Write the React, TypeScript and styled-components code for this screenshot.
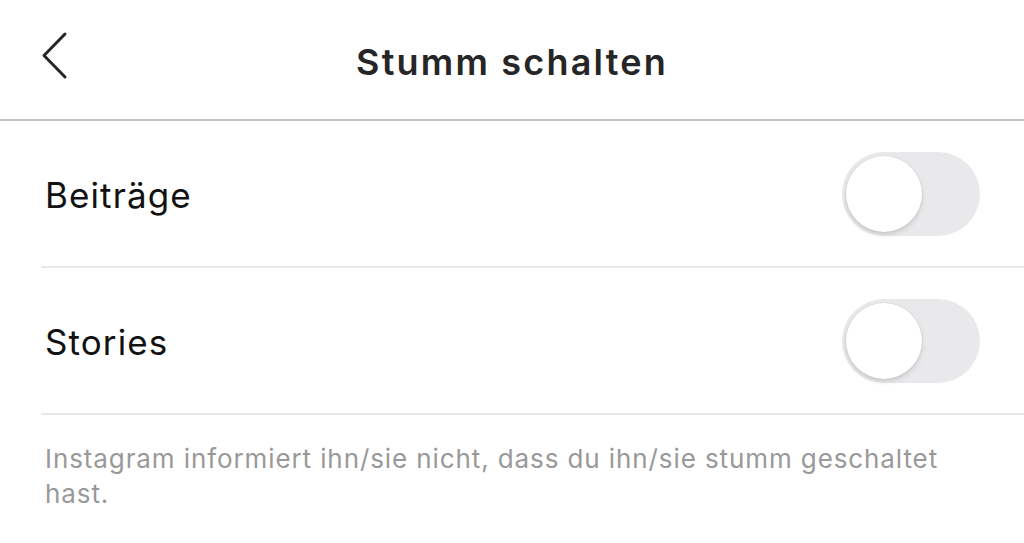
import React, { useState } from "react";
import styled, { createGlobalStyle } from "styled-components";

const Global = createGlobalStyle`
  html, body { margin: 0; padding: 0; background: #fff; }
  body { font-family: Inter, "Noto Sans", "Liberation Sans", sans-serif; -webkit-font-smoothing: antialiased; }
`;

const Page = styled.div`
  width: 1024px;
  height: 543px;
  background: #fff;
  overflow: hidden;
`;

const Header = styled.header`
  position: relative;
  height: 119px;
  display: flex;
  align-items: center;
  justify-content: center;
  border-bottom: 2px solid #c4c4c4;
`;

const BackButton = styled.button`
  position: absolute;
  left: 38px;
  top: 30px;
  width: 34px;
  height: 52px;
  padding: 0;
  border: 0;
  background: none;
  display: flex;
  align-items: center;
  justify-content: center;
`;

const Title = styled.h1`
  margin: 0;
  margin-top: 4px;
  font-size: 36px;
  font-weight: 600;
  color: #262626;
  letter-spacing: 2.2px;
`;

const List = styled.div`
  padding-left: 41px;
`;

const Row = styled.div`
  height: 145px;
  display: flex;
  align-items: center;
  justify-content: space-between;
  padding-right: 44px;
  border-bottom: 2px solid #e8e8e8;
`;

const Label = styled.span`
  font-size: 35px;
  color: #111;
  padding-left: 4px;
  margin-top: 2px;
  letter-spacing: 1.1px;
`;

const Track = styled.button<{ $on: boolean }>`
  position: relative;
  width: 138px;
  height: 84px;
  border-radius: 42px;
  border: 0;
  padding: 0;
  background: ${(p) => (p.$on ? "#3897f0" : "#e9e9eb")};
  cursor: pointer;
`;

const Knob = styled.span<{ $on: boolean }>`
  position: absolute;
  top: 4px;
  left: ${(p) => (p.$on ? "58px" : "4px")};
  width: 76px;
  height: 76px;
  border-radius: 50%;
  background: #fff;
  box-shadow: 0 3px 5px rgba(0, 0, 0, 0.12), 0 0 0 1px rgba(0, 0, 0, 0.04);
`;

const Note = styled.p`
  margin: 0;
  padding: 26px 60px 0 45px;
  font-size: 26px;
  line-height: 35px;
  color: #999999;
  letter-spacing: 0.9px;
`;

function Toggle() {
  const [on, setOn] = useState(false);
  return (
    <Track $on={on} onClick={() => setOn(!on)} aria-pressed={on}>
      <Knob $on={on} />
    </Track>
  );
}

export default function App() {
  return (
    <Page>
      <Global />
      <Header>
        <BackButton aria-label="Zurück">
          <svg width="30" height="50" viewBox="0 0 30 50" fill="none">
            <path d="M25 3 L4 24.5 L25 46" stroke="#262626" strokeWidth="3" strokeLinecap="round" strokeLinejoin="round" />
          </svg>
        </BackButton>
        <Title>Stumm schalten</Title>
      </Header>
      <List>
        <Row>
          <Label>Beiträge</Label>
          <Toggle />
        </Row>
        <Row>
          <Label>Stories</Label>
          <Toggle />
        </Row>
      </List>
      <Note>Instagram informiert ihn/sie nicht, dass du ihn/sie stumm geschaltet hast.</Note>
    </Page>
  );
}
